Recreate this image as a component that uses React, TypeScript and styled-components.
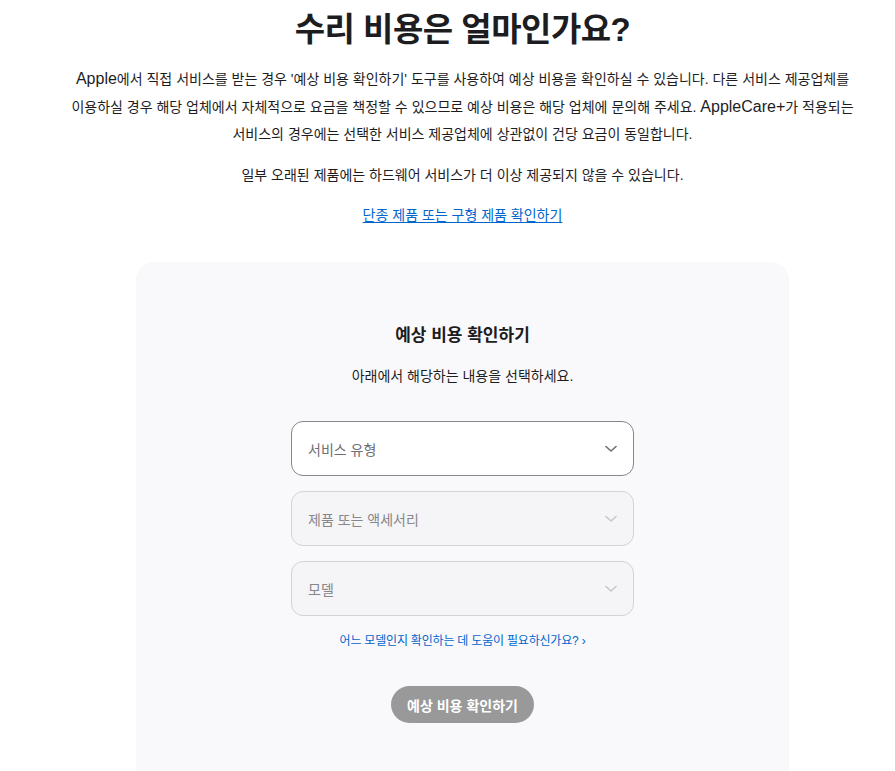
import React from "react";
import styled, { createGlobalStyle } from "styled-components";

const GlobalStyle = createGlobalStyle`
  html, body {
    margin: 0;
    padding: 0;
    background: #fff;
  }
  body {
    font-family: "Liberation Sans", "Noto Sans CJK KR", sans-serif;
    color: #1d1d1f;
    -webkit-font-smoothing: antialiased;
  }
`;

const Page = styled.main`
  width: 895px;
  height: 771px;
  overflow: hidden;
  box-sizing: border-box;
  padding: 8px 0 0 30px;
  display: flex;
  flex-direction: column;
  align-items: center;
`;

const Title = styled.h1`
  margin: 0;
  font-size: 33px;
  line-height: 44px;
  font-weight: 700;
  letter-spacing: -0.5px;
  color: #1d1d1f;
`;

const Intro = styled.p<{ $gap?: number }>`
  margin: ${(p) => p.$gap ?? 0}px 0 0;
  max-width: 800px;
  text-align: center;
  font-size: 14px;
  line-height: 27px;
  word-break: keep-all;
  color: #1d1d1f;
`;

const Latin = styled.span`
  font-size: 16px;
`;

const UnderLink = styled.a`
  margin-top: 13px;
  font-size: 14px;
  line-height: 27px;
  color: #0066cc;
  text-decoration: underline;
  text-underline-offset: 2px;
`;

const Card = styled.section`
  margin-top: 33px;
  width: 653px;
  flex: 1;
  box-sizing: border-box;
  background: #f9f9fb;
  border-radius: 18px 18px 0 0;
  padding-top: 61px;
  display: flex;
  flex-direction: column;
  align-items: center;
`;

const CardTitle = styled.h2`
  margin: 0;
  font-size: 17px;
  line-height: 26px;
  font-weight: 700;
`;

const CardSub = styled.p`
  margin: 15px 0 0;
  font-size: 14px;
  line-height: 24px;
`;

const Fields = styled.div`
  margin-top: 33px;
  width: 343px;
  display: flex;
  flex-direction: column;
  gap: 15px;
`;

const Select = styled.div<{ $active?: boolean }>`
  height: 55px;
  box-sizing: border-box;
  border-radius: 12px;
  border: 1px solid ${(p) => (p.$active ? "#86868b" : "#d2d2d7")};
  background: ${(p) => (p.$active ? "#ffffff" : "#f5f5f7")};
  padding: 0 16px 0 16px;
  display: flex;
  align-items: center;
  justify-content: space-between;
  font-size: 14px;
  color: ${(p) => (p.$active ? "#6e6e73" : "#86868b")};
`;

const Chevron = ({ color }: { color: string }) => (
  <svg width="12" height="8" viewBox="0 0 12 8" fill="none">
    <path d="M1 1.5 L6 6 L11 1.5" stroke={color} strokeWidth="1.6" strokeLinecap="round" strokeLinejoin="round" />
  </svg>
);

const HelpLink = styled.a`
  margin-top: 16px;
  font-size: 12px;
  line-height: 18px;
  letter-spacing: -0.2px;
  color: #0066cc;
  text-decoration: none;
`;

const Button = styled.button`
  margin-top: 36px;
  height: 37px;
  padding: 0 16px;
  border: none;
  border-radius: 19px;
  background: #999999;
  color: #fff;
  font-family: inherit;
  font-size: 14px;
  font-weight: 700;
`;

const fields = [
  { label: "서비스 유형", active: true },
  { label: "제품 또는 액세서리", active: false },
  { label: "모델", active: false },
];

export default function App() {
  return (
    <>
      <GlobalStyle />
      <Page>
        <Title>수리 비용은 얼마인가요?</Title>
        <Intro $gap={13}>
          <Latin>Apple</Latin>에서 직접 서비스를 받는 경우 '예상 비용 확인하기' 도구를 사용하여 예상 비용을 확인하실 수 있습니다. 다른 서비스 제공업체를 이용하실 경우 해당 업체에서 자체적으로 요금을 책정할 수 있으므로 예상 비용은 해당 업체에 문의해 주세요. <Latin>AppleCare+</Latin>가 적용되는 서비스의 경우에는 선택한 서비스 제공업체에 상관없이 건당 요금이 동일합니다.
        </Intro>
        <Intro $gap={14}>일부 오래된 제품에는 하드웨어 서비스가 더 이상 제공되지 않을 수 있습니다.</Intro>
        <UnderLink href="#">단종 제품 또는 구형 제품 확인하기</UnderLink>
        <Card>
          <CardTitle>예상 비용 확인하기</CardTitle>
          <CardSub>아래에서 해당하는 내용을 선택하세요.</CardSub>
          <Fields>
            {fields.map((f) => (
              <Select key={f.label} $active={f.active}>
                <span>{f.label}</span>
                <Chevron color={f.active ? "#6e6e73" : "#c7c7cc"} />
              </Select>
            ))}
          </Fields>
          <HelpLink href="#">어느 모델인지 확인하는 데 도움이 필요하신가요? ›</HelpLink>
          <Button>예상 비용 확인하기</Button>
        </Card>
      </Page>
    </>
  );
}
